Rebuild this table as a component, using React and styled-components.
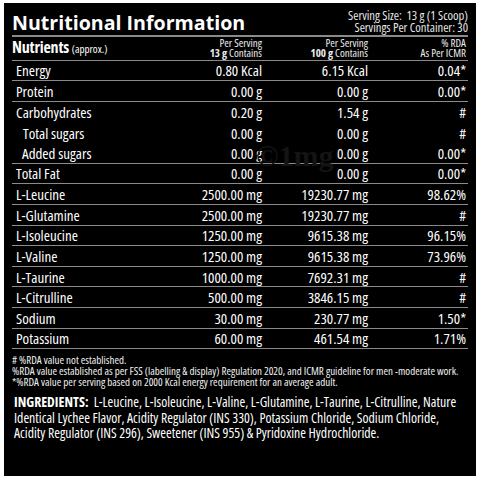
import React from "react";
import styled, { createGlobalStyle } from "styled-components";

const Global = createGlobalStyle`
  html, body { margin: 0; padding: 0; background: #ffffff; }
  * { box-sizing: border-box; }
`;

const Frame = styled.div`
  position: relative;
  margin: 3px 0 0 4px;
  width: 472px;
  height: 473px;
  background: #000;
  color: #fff;
  padding: 0 8px;
  font-family: "Open Sans", "Liberation Sans", sans-serif;
  overflow: hidden;
`;

const TopBar = styled.div`
  display: flex;
  justify-content: space-between;
  align-items: flex-end;
  height: 34px;
  border-bottom: 2px solid #8a8a8a;
  padding-bottom: 0;
`;

const Title = styled.h1`
  margin: 0;
  font-size: 19.6px;
  line-height: 24px;
  font-weight: 700;
  font-stretch: 100%;
`;

const Serving = styled.div`
  text-align: right;
  font-size: 12.6px;
  line-height: 12px;
  font-stretch: 87.5%;
  color: #e6e6e6;
  padding-bottom: 1px;
`;

const Grid = styled.div`
  display: grid;
  grid-template-columns: 1fr 90px 106px 98px;
  align-items: center;
  padding: 0 2px 0 4px;
`;

const HeaderRow = styled(Grid)`
  height: 23.5px;
  padding-left: 0;
  border-bottom: 1.5px solid #8a8a8a;
  font-stretch: 75%;
`;

const HeadLabel = styled.div`
  font-size: 16px;
  font-weight: 700;
  line-height: 18px;
  letter-spacing: -0.2px;
  span {
    font-size: 11px;
    font-weight: 400;
    letter-spacing: 0;
  }
`;

const HeadCell = styled.div`
  text-align: right;
  font-size: 11px;
  line-height: 10px;
  color: #ececec;
  b { font-weight: 700; }
`;

const Row = styled(Grid)`
  height: 20.64px;
  border-bottom: ${(p) => (p.$line ? "1.5px solid #8a8a8a" : "none")};
  font-size: 15px;
  font-stretch: 75%;
  line-height: 18px;
`;

const Name = styled.div`
  padding-left: ${(p) => p.$indent || 0}px;
`;

const Val = styled.div`
  text-align: right;
`;

const Notes = styled.div`
  padding: 5px 0 0 0;
  font-size: 11px;
  font-stretch: 75%;
  line-height: 11px;
  color: #f0f0f0;
`;

const Ingredients = styled.p`
  margin: 7px 0 0 2px;
  font-size: 13.8px;
  line-height: 15.5px;
  font-stretch: 75%;
  white-space: nowrap;
  b { font-weight: 700; }
`;

const Watermark = styled.div`
  position: absolute;
  left: 252px;
  top: 136px;
  font-family: "Liberation Serif", serif;
  font-weight: 700;
  font-size: 30px;
  color: #141414;
  pointer-events: none;
`;

const rows = [
  { n: "Energy", a: "0.80 Kcal", b: "6.15 Kcal", c: "0.04*", line: true },
  { n: "Protein", a: "0.00 g", b: "0.00 g", c: "0.00*", line: true },
  { n: "Carbohydrates", a: "0.20 g", b: "1.54 g", c: "#" },
  { n: "Total sugars", i: 7, a: "0.00 g", b: "0.00 g", c: "#" },
  { n: "Added sugars", i: 6, a: "0.00 g", b: "0.00 g", c: "0.00*", line: true },
  { n: "Total Fat", a: "0.00 g", b: "0.00 g", c: "0.00*", line: true },
  { n: "L-Leucine", a: "2500.00 mg", b: "19230.77 mg", c: "98.62%", line: true },
  { n: "L-Glutamine", a: "2500.00 mg", b: "19230.77 mg", c: "#", line: true },
  { n: "L-Isoleucine", a: "1250.00 mg", b: "9615.38 mg", c: "96.15%", line: true },
  { n: "L-Valine", a: "1250.00 mg", b: "9615.38 mg", c: "73.96%", line: true },
  { n: "L-Taurine", a: "1000.00 mg", b: "7692.31 mg", c: "#", line: true },
  { n: "L-Citrulline", a: "500.00 mg", b: "3846.15 mg", c: "#", line: true },
  { n: "Sodium", a: "30.00 mg", b: "230.77 mg", c: "1.50*", line: true },
  { n: "Potassium", a: "60.00 mg", b: "461.54 mg", c: "1.71%", line: true },
];

export default function App() {
  return (
    <>
      <Global />
      <Frame>
        <TopBar>
          <Title>Nutritional Information</Title>
          <Serving>
            Serving Size:&nbsp; 13 g (1 Scoop)
            <br />
            Servings Per Container: 30
          </Serving>
        </TopBar>
        <HeaderRow>
          <HeadLabel>
            Nutrients <span>(approx.)</span>
          </HeadLabel>
          <HeadCell>
            Per Serving
            <br />
            <b>13 g</b> Contains
          </HeadCell>
          <HeadCell>
            Per Serving
            <br />
            <b>100 g</b> Contains
          </HeadCell>
          <HeadCell>
            % RDA
            <br />
            As Per ICMR
          </HeadCell>
        </HeaderRow>
        {rows.map((r) => (
          <Row key={r.n} $line={r.line}>
            <Name $indent={r.i}>{r.n}</Name>
            <Val>{r.a}</Val>
            <Val>{r.b}</Val>
            <Val>{r.c}</Val>
          </Row>
        ))}
        <Notes>
          # %RDA value not established.
          <br />
          %RDA value established as per FSS (labelling &amp; display) Regulation 2020, and ICMR guideline for men -moderate work.
          <br />
          *%RDA value per serving based on 2000 Kcal energy requirement for an average adult.
        </Notes>
        <Ingredients>
          <b>INGREDIENTS:</b>&nbsp; L-Leucine, L-Isoleucine, L-Valine, L-Glutamine, L-Taurine, L-Citrulline, Nature
          <br />
          Identical Lychee Flavor, Acidity Regulator (INS 330), Potassium Chloride, Sodium Chloride,
          <br />
          Acidity Regulator (INS 296), Sweetener (INS 955) &amp; Pyridoxine Hydrochloride.
        </Ingredients>
        <Watermark>©1mg</Watermark>
      </Frame>
    </>
  );
}
